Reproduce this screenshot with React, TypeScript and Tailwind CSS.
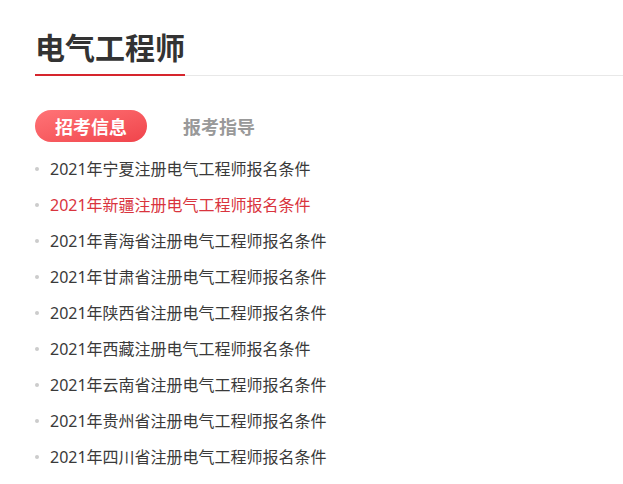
const items = [
  "2021年宁夏注册电气工程师报名条件",
  "2021年新疆注册电气工程师报名条件",
  "2021年青海省注册电气工程师报名条件",
  "2021年甘肃省注册电气工程师报名条件",
  "2021年陕西省注册电气工程师报名条件",
  "2021年西藏注册电气工程师报名条件",
  "2021年云南省注册电气工程师报名条件",
  "2021年贵州省注册电气工程师报名条件",
  "2021年四川省注册电气工程师报名条件",
];

export default function App() {
  return (
    <div
      className="min-h-[484px] w-[623px] bg-white pl-[35px]"
      style={{ fontFamily: '"Noto Sans CJK SC", "Noto Sans", sans-serif' }}
    >
      {/* header */}
      <div className="flex border-b border-[#e8e8e8] pt-[25px]">
        <h1 className="-mb-px border-b-2 border-[#d6252d] pb-[7px] text-[30px] font-bold leading-[42px] text-[#333]">
          电气工程师
        </h1>
      </div>

      {/* tabs */}
      <div className="mt-[34px] flex items-center gap-[16px]">
        <span className="flex h-[32px] items-center rounded-full bg-gradient-to-br from-[#ff7377] to-[#f0434b] px-[20px] text-[18px] font-bold text-white">
          招考信息
        </span>
        <span className="flex h-[32px] items-center px-[20px] text-[18px] font-bold text-[#999]">
          报考指导
        </span>
      </div>

      {/* list */}
      <ul
        className="mt-[9px]"
        style={{ fontFamily: '"Noto Sans", "Noto Sans CJK SC", sans-serif' }}
      >
        {items.map((t, i) => (
          <li key={t} className="flex h-[36px] items-center">
            <span className="mr-[11px] h-[4px] w-[4px] rounded-full bg-[#cccccc]" />
            <span
              className={
                i === 1
                  ? "text-[16px] text-[#d9343e]"
                  : "text-[16px] text-[#3a3a3a]"
              }
            >
              {t}
            </span>
          </li>
        ))}
      </ul>
    </div>
  );
}
